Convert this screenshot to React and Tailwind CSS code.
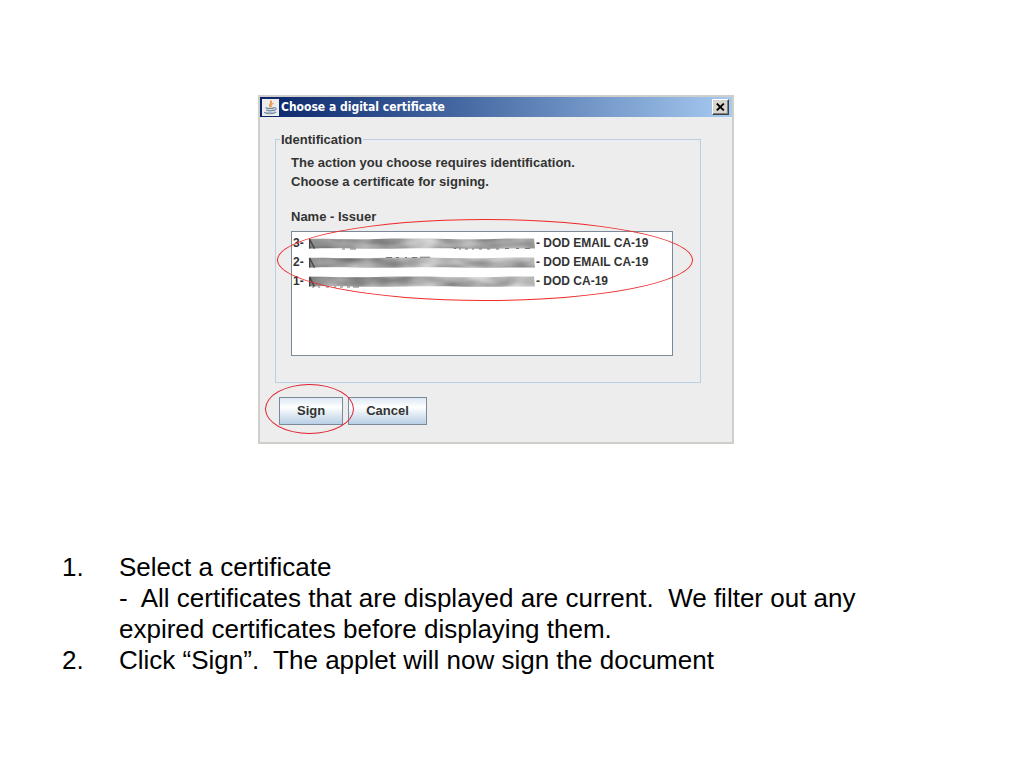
import { useState } from "react";

const certificates = [
  {
    id: 3,
    issuer: "DOD EMAIL CA-19",
    seed: 4,
    specks: "M34 13h3M42 13h6M146 12.5h2M151 13h2M157 13h3M164 13h2M171 13h3M179 13h3M188 13h3M197 12.5h4M208 12.5h3M217 12.5h5",
  },
  {
    id: 2,
    issuer: "DOD EMAIL CA-19",
    seed: 11,
    specks: "M78 2.5h6M88 2.5h3M97 2.5h2M104 2.5h5M112 2.2h10",
  },
  {
    id: 1,
    issuer: "DOD CA-19",
    seed: 23,
    specks: "M4 13h2M10 13h2M18 13h3M26 13h2M32 13h3M39 13h3M45 13h6",
  },
];

const JavaIcon = () => (
  <svg width="17" height="17" viewBox="0 0 17 17" aria-hidden="true">
    <rect width="17" height="17" fill="#eeedeb" />
    <g fill="none" strokeLinecap="round">
      <path d="M9 2.2C10.4 4 6.4 5 8.2 7.8" stroke="#e88a3a" strokeWidth="1.6" />
      <path d="M11.2 4.4C9.2 5.2 9 6.4 9.8 7.6" stroke="#eda86c" strokeWidth="1.2" />
      <path d="M4 8.8C6 9.8 10 9.8 11.8 8.9" stroke="#6f8aa6" strokeWidth="1.3" />
      <path d="M4.8 11.1C7 12 9.6 12 11.4 11.1" stroke="#6f8aa6" strokeWidth="1.4" />
      <path d="M12.2 8.8C15 8.2 14.6 11 12.2 11.4" stroke="#6f8aa6" strokeWidth="1.1" />
      <path d="M2.6 13.4C5 15.2 12 15.2 14 13.2" stroke="#6f8aa6" strokeWidth="1.2" />
      <path d="M4.4 13.2C7 13.9 10 13.9 12.2 13" stroke="#9aaec2" strokeWidth="1" />
    </g>
  </svg>
);

// Smeared bar that hides the holder's name
const Redacted = ({ seed, specks }) => (
  <svg width="228" height="15" viewBox="0 0 228 15" className="shrink-0" aria-hidden="true">
    <defs>
      <filter
        id={`smear-${seed}`}
        x="0"
        y="0"
        width="1"
        height="1"
        colorInterpolationFilters="sRGB"
      >
        <feTurbulence type="fractalNoise" baseFrequency="0.03 0.09" numOctaves="2" seed={seed} />
        <feColorMatrix
          type="matrix"
          values="0.6 0 0 0 0.36  0.6 0 0 0 0.36  0.6 0 0 0 0.36  0 0 0 0 1"
        />
        <feComposite in2="SourceGraphic" operator="in" />
        <feGaussianBlur stdDeviation="0.6" />
      </filter>
      <linearGradient id={`shade-${seed}`}>
        <stop offset="0" stopColor="#333" stopOpacity="0.4" />
        <stop offset="0.4" stopColor="#333" stopOpacity="0.15" />
        <stop offset="1" stopColor="#333" stopOpacity="0" />
      </linearGradient>
    </defs>
    <path
      filter={`url(#smear-${seed})`}
      d="M1 2.5H14L30 3.2H60L84 2.4H120L150 3.2H180L200 2.4H226L227 12.4H205L190 12.8H160L140 12.2H110L84 12.8H50L36 12.2H14L5 12.8H1Z"
    />
    <path fill={`url(#shade-${seed})`} d="M1 3H60V12H1Z" />
    <path d="M1.6 12.6V3L6.5 12.6" stroke="#444" strokeWidth="1.3" fill="none" />
    <path d={specks} stroke="#777" strokeWidth="1" />
  </svg>
);

const DialogButton = ({ children }) => (
  <button
    type="button"
    className="h-7 border border-[#7a8a99] bg-linear-to-b from-[#dde8f3] via-white via-35% to-[#b8cfe5] px-[17px] leading-4"
  >
    {children}
  </button>
);

const CertificateDialog = () => {
  const [selected, setSelected] = useState(null);

  return (
    <section
      aria-labelledby="dialog-title"
      className="w-full max-w-[476px] border-2 border-[#d0cec8] bg-[#ededed] font-['Liberation_Sans',Arial,sans-serif] text-[13px] font-bold text-[#333]"
    >
      {/* Title bar */}
      <header className="flex h-5 items-center gap-0.5 bg-linear-to-r from-[#0a246a] to-[#a6caf0] pl-0.5 pr-[3px]">
        <JavaIcon />
        <h1
          id="dialog-title"
          className="flex-1 font-['DejaVu_Sans_Condensed','DejaVu_Sans',sans-serif] text-[12px] leading-4 text-white"
        >
          Choose a digital certificate
        </h1>
        <button
          type="button"
          aria-label="Close"
          className="flex h-4 w-[17px] items-center justify-center border border-t-white border-r-[#404040] border-b-[#404040] border-l-white bg-[#d8d5cd] text-black shadow-[inset_-1px_-1px_0_#808080]"
        >
          <svg width="9" height="8" viewBox="0 0 9 8" stroke="currentColor" strokeWidth="1.8">
            <path d="M0.8 0.5L7.8 7.5M7.8 0.5L0.8 7.5" />
          </svg>
        </button>
      </header>

      <div className="pt-[15px] pr-[31px] pb-[17px] pl-[15px]">
        <fieldset className="border border-[#b8cfe5]">
          <legend className="ml-1 px-px leading-[15px]">Identification</legend>
          <div className="pt-1.5 pr-[27px] pb-[26px] pl-[15px]">
            <p className="leading-[19px]">The action you choose requires identification.</p>
            <p className="leading-[19px]">Choose a certificate for signing.</p>
            <p id="list-label" className="mt-4 leading-[19px]">
              Name - Issuer
            </p>

            <div className="relative mt-[5px]">
              <ul
                role="listbox"
                aria-labelledby="list-label"
                className="h-[125px] border border-[#7a8a99] bg-white py-0.5 text-[12px]"
              >
                {certificates.map((cert) => (
                  <li
                    key={cert.id}
                    role="option"
                    aria-selected={selected === cert.id}
                    onClick={() => setSelected(cert.id)}
                    className="flex h-[19px] items-center pl-px leading-[19px] whitespace-nowrap aria-selected:bg-[#b8cfe5]"
                  >
                    <span className="w-[15px]">{cert.id}-</span>
                    <Redacted seed={cert.seed} specks={cert.specks} />
                    <span>- {cert.issuer}</span>
                  </li>
                ))}
              </ul>
              {/* Red marker round the list */}
              <span className="pointer-events-none absolute -top-3 -right-5 -left-3.5 h-[82px] rounded-[50%] border border-[#ee2a2a]" />
            </div>
          </div>
        </fieldset>

        <div className="mt-3.5 ml-1 flex gap-[5px]">
          <div className="relative">
            <DialogButton>Sign</DialogButton>
            {/* Red marker round the button */}
            <span className="pointer-events-none absolute -top-[13px] -right-[11px] -bottom-[9px] -left-3.5 z-10 rounded-[50%] border border-[#e02030]" />
          </div>
          <DialogButton>Cancel</DialogButton>
        </div>
      </div>
    </section>
  );
};

const App = () => {
  return (
    <main className="min-h-screen bg-white pt-[95px] text-black">
      <div className="flex justify-center pr-8">
        <CertificateDialog />
      </div>

      <ol className="mt-[108px] pr-32 pl-[62px] font-['Liberation_Sans',Arial,sans-serif] text-[26px] leading-[31px] whitespace-pre-wrap">
        <li className="flex">
          <span className="w-[57px] shrink-0">1.</span>
          <div>
            <p>Select a certificate</p>
            <p>
              {"-  All certificates that are displayed are current.  We filter out any expired certificates before displaying them."}
            </p>
          </div>
        </li>
        <li className="flex">
          <span className="w-[57px] shrink-0">2.</span>
          <p>{"Click “Sign”.  The applet will now sign the document"}</p>
        </li>
      </ol>
    </main>
  );
};

export default App;
